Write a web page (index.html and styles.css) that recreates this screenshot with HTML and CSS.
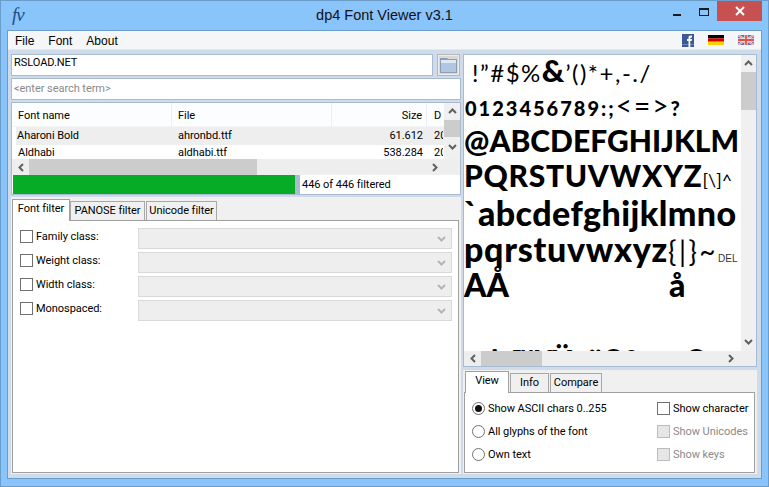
FILE: index.html
```html
<!DOCTYPE html>
<html lang="en">
<head>
<meta charset="utf-8">
<title>dp4 Font Viewer v3.1</title>
<link rel="stylesheet" href="styles.css">
</head>
<body>
<div class="window">
  <header class="titlebar">
    <span class="logo">fv</span>
    <span class="title">dp4 Font Viewer v3.1</span>
    <div class="controls">
      <span class="ctl"><span class="min"></span></span>
      <span class="ctl"><span class="max"></span></span>
      <span class="close"><svg width="12" height="10" viewBox="0 0 12 10"><path d="M2 1l8 8M10 1l-8 8" stroke="#fff" stroke-width="2" fill="none"/></svg></span>
    </div>
  </header>
  <div class="client">
    <nav class="menubar">
      <span class="menu">File</span><span class="menu">Font</span><span class="menu">About</span>
      <div class="flags">
        <svg class="fb" width="12" height="13" viewBox="0 0 12 13"><rect width="12" height="13" fill="#3b5998"/><rect y="10" width="12" height="1" fill="#6f88b8"/><path d="M6.500 13V7H5V5h1.500V3.800C6.500 2.300 7.400 1.500 8.700 1.500H10v2H9c-.5 0-.7.200-.7.700V5H10l-.3 2H8.300v6z" fill="#fff"/></svg>
        <svg class="de" width="16" height="10" viewBox="0 0 16 10"><rect width="16" height="3.400" fill="#000"/><rect y="3.400" width="16" height="3.300" fill="#d40000"/><rect y="6.700" width="16" height="3.300" fill="#ffce00"/></svg>
        <svg class="uk" width="16" height="10" viewBox="0 0 16 10"><rect width="16" height="10" fill="#5c6fb0"/><path d="M0 0l16 10M16 0L0 10" stroke="#e8dfe6" stroke-width="2"/><path d="M0 0l16 10M16 0L0 10" stroke="#e0707a" stroke-width=".7"/><path d="M8 0v10M0 5h16" stroke="#f0e8ea" stroke-width="3.400"/><path d="M8 0v10M0 5h16" stroke="#e8503c" stroke-width="1.800"/></svg>
      </div>
    </nav>
    <main class="panes">
      <section class="left">
        <div class="path-row">
          <div class="input path">RSLOAD.NET</div>
          <div class="browse"><svg width="17" height="15" viewBox="0 0 17 15"><path d="M0 15V0h7l1 1h9v14z" fill="#8c9db6"/><rect x="1" y="2" width="15" height="3" fill="#e3e9f2"/><rect x="1" y="5" width="15" height="9" fill="#b3c6df"/></svg></div>
        </div>
        <div class="input search">&lt;enter search term&gt;</div>
        <div class="list">
          <div class="list-main">
            <div class="list-view">
              <div class="row head"><span class="c1">Font name</span><span class="c2">File</span><span class="c3">Size</span><span class="c4">D</span></div>
              <div class="row first"><span class="c1">Aharoni Bold</span><span class="c2">ahronbd.ttf</span><span class="c3">61.612</span><span class="c4">20</span></div>
              <div class="row"><span class="c1">Aldhabi</span><span class="c2">aldhabi.ttf</span><span class="c3">538.284</span><span class="c4">20</span></div>
            </div>
            <div class="vscroll list-v">
              <svg class="arrow" width="9" height="6" viewBox="0 0 9 6"><path d="M1 5l3.500-3.500L8 5" stroke="#606060" stroke-width="2" fill="none"/></svg>
              <div class="thumb list-v-thumb"></div>
              <svg class="arrow" width="9" height="6" viewBox="0 0 9 6"><path d="M1 1l3.500 3.500L8 1" stroke="#606060" stroke-width="2" fill="none"/></svg>
            </div>
          </div>
          <div class="hscroll list-h">
            <svg class="arrow-h" width="6" height="9" viewBox="0 0 6 9"><path d="M5 1L1.500 4.500 5 8" stroke="#606060" stroke-width="2" fill="none"/></svg>
            <div class="thumb list-h-thumb"></div>
            <svg class="arrow-h end" width="6" height="9" viewBox="0 0 6 9"><path d="M1 1l3.500 3.500L1 8" stroke="#606060" stroke-width="2" fill="none"/></svg>
          </div>
          <div class="progress">
            <div class="bar"></div><div class="bar-gap"></div><span class="status">446 of 446 filtered</span>
          </div>
        </div>
        <div class="tabs left-tabs">
          <div class="tabstrip">
            <span class="tab active t-font">Font filter</span><span class="tab t-panose">PANOSE filter</span><span class="tab t-unicode">Unicode filter</span>
          </div>
          <div class="tabbody filters">
            <div class="filter"><span class="check"></span><label>Family class:</label><div class="combo"><svg width="9" height="6" viewBox="0 0 9 6"><path d="M1 1l3.500 3.500L8 1" stroke="#b4b4b4" stroke-width="2" fill="none"/></svg></div></div>
            <div class="filter"><span class="check"></span><label>Weight class:</label><div class="combo"><svg width="9" height="6" viewBox="0 0 9 6"><path d="M1 1l3.500 3.500L8 1" stroke="#b4b4b4" stroke-width="2" fill="none"/></svg></div></div>
            <div class="filter"><span class="check"></span><label>Width class:</label><div class="combo"><svg width="9" height="6" viewBox="0 0 9 6"><path d="M1 1l3.500 3.500L8 1" stroke="#b4b4b4" stroke-width="2" fill="none"/></svg></div></div>
            <div class="filter"><span class="check"></span><label>Monospaced:</label><div class="combo"><svg width="9" height="6" viewBox="0 0 9 6"><path d="M1 1l3.500 3.500L8 1" stroke="#b4b4b4" stroke-width="2" fill="none"/></svg></div></div>
          </div>
        </div>
      </section>
      <section class="right">
        <div class="viewer">
          <div class="viewer-main">
            <div class="canvas">
              <div class="gl l1"><i class="th">!”#$%</i><b class="amp">&amp;</b><i class="th">’()*+,-./</i></div>
              <div class="gl l2">0123456789:;<i class="th">&lt;=&gt;</i>?</div>
              <div class="gl l3">@ABCDEFGHIJKLM</div>
              <div class="gl l4">PQRSTUVWXYZ<i class="th small">[\]^</i></div>
              <div class="gl l5">`abcdefghijklmno</div>
              <div class="gl l6">pqrstuvwxyz<i class="th brace">{|}~</i><span class="del">DEL</span></div>
              <div class="gl l7"><span class="aa">AÅ</span><span class="aring">å</span></div>
              <div class="gl l8"><span class="p1">†</span><span class="p2">™¥Ÿ•¨©ª</span><span class="p3">©¬</span></div>
            </div>
            <div class="vscroll view-v">
              <svg class="arrow" width="9" height="6" viewBox="0 0 9 6"><path d="M1 5l3.500-3.500L8 5" stroke="#606060" stroke-width="2" fill="none"/></svg>
              <div class="thumb view-v-thumb"></div>
              <svg class="arrow endv" width="9" height="6" viewBox="0 0 9 6"><path d="M1 1l3.500 3.500L8 1" stroke="#606060" stroke-width="2" fill="none"/></svg>
            </div>
          </div>
          <div class="hscroll view-h">
            <svg class="arrow-h" width="6" height="9" viewBox="0 0 6 9"><path d="M5 1L1.500 4.500 5 8" stroke="#606060" stroke-width="2" fill="none"/></svg>
            <div class="thumb view-h-thumb"></div>
            <svg class="arrow-h end" width="6" height="9" viewBox="0 0 6 9"><path d="M1 1l3.500 3.500L1 8" stroke="#606060" stroke-width="2" fill="none"/></svg>
          </div>
        </div>
        <div class="tabs right-tabs">
          <div class="tabstrip">
            <span class="tab active t-view">View</span><span class="tab t-info">Info</span><span class="tab t-compare">Compare</span>
          </div>
          <div class="tabbody options">
            <div class="opt-col">
              <div class="opt"><span class="radio on"></span>Show ASCII chars 0..255</div>
              <div class="opt"><span class="radio"></span>All glyphs of the font</div>
              <div class="opt"><span class="radio"></span>Own text</div>
            </div>
            <div class="opt-col opt-right">
              <div class="opt"><span class="check"></span>Show character</div>
              <div class="opt off"><span class="check dis"></span>Show Unicodes</div>
              <div class="opt off"><span class="check dis"></span>Show keys</div>
            </div>
          </div>
        </div>
      </section>
    </main>
  </div>
</div>
</body>
</html>
```
FILE: styles.css
```css
* { box-sizing: border-box; }
html, body { margin: 0; padding: 0; }
body { width: 769px; height: 487px; overflow: hidden; font: 11px/14px Roboto, "Liberation Sans", sans-serif; letter-spacing: -.05px; color: #000; }
.window { width: 769px; height: 487px; background: #89c4fb; border: 1px solid #6b9dcb; display: flex; flex-direction: column; }

.titlebar { height: 29px; flex: none; display: flex; align-items: flex-start; position: relative; }
.logo { position: absolute; left: 11px; top: 4px; font: italic 19px/20px "Liberation Serif", serif; color: #1c4f86; letter-spacing: -1px; }
.title { flex: 1; text-align: center; font: 14.500px/20px "Liberation Sans", sans-serif; letter-spacing: 0; padding-top: 4px; color: #111; }
.controls { position: absolute; right: 6px; top: 0; display: flex; height: 20px; }
.ctl { width: 27px; display: flex; align-items: center; justify-content: center; }
.min { width: 8px; height: 2px; background: #1a1a1a; margin-top: 8px; }
.max { width: 10px; height: 8px; border: 1px solid #1a1a1a; border-top-width: 2px; margin-top: 1px; }
.close { width: 45px; background: #c75050; display: flex; align-items: center; justify-content: center; }

.client { flex: 1; margin: 0 6px 7px; border: 1px solid #6b9dcb; background: #d0dbe9; display: flex; flex-direction: column; min-height: 0; }
.menubar { height: 19px; flex: none; background: #f5f6f7; display: flex; align-items: center; padding: 2px 0 0 7px; border-bottom: 1px solid #e4e8ee; }
.menu { margin-right: 14px; font: 12px/14px "Liberation Sans", sans-serif; letter-spacing: 0; }
.flags { margin-left: auto; display: flex; align-items: center; padding-right: 7px; margin-top: -2px; }
.fb { margin-right: 14px; }
.uk { margin-left: 14px; }

.panes { flex: 1; display: flex; padding: 4px 3px 4px; gap: 2px; min-height: 0; }
.left { width: 450px; display: flex; flex-direction: column; gap: 2px; }
.right { width: 294px; display: flex; flex-direction: column; gap: 3px; }

.input { height: 22px; background: #fff; border: 1px solid #a9bbd3; padding: 3px 2px; }
.search { color: #8a8a8a; }
.path-row { display: flex; gap: 4px; }
.path { width: 422px; padding-top: 1px; }
.browse { width: 23px; height: 22px; background: #d9d9d9; border: 1px solid #b8b8b8; box-shadow: inset 0 0 0 1px #ececec; display: flex; align-items: center; justify-content: center; }

.list { height: 93px; background: #fff; border: 1px solid #a9bbd3; display: flex; flex-direction: column; }
.list-main { height: 56px; display: flex; }
.list-view { width: 432px; overflow: hidden; }
.row { display: flex; height: 15px; line-height: 15px; white-space: nowrap; }
.row.head { height: 24px; line-height: 25px; background: #fcfdfe; border-bottom: 1px solid #f4f4f4; }
.row.first { height: 18px; line-height: 18px; background: #eeeeee; margin-left: 4px; }
.row.first .c1 { width: 156px; padding-left: 1px; }
.c1 { width: 160px; padding-left: 6px; flex: none; }
.c2 { width: 160px; padding-left: 6px; flex: none; }
.c3 { width: 95px; text-align: right; padding-right: 4px; flex: none; }
.c4 { flex: none; padding-left: 7px; width: 16px; overflow: hidden; }
.head .c1, .head .c2, .head .c3 { border-right: 1px solid #e9eff6; height: 23px; }

.vscroll { width: 15px; background: #f0f0f0; display: flex; flex-direction: column; align-items: center; }
.thumb { background: #cccccc; }
.list-v { width: 16px; }
.arrow { flex: none; margin: 5px 0; }
.list-v-thumb { width: 100%; height: 17px; flex: none; margin-top: 1px; }
.list-v .arrow:last-child { margin-top: 7px; }
.hscroll { display: flex; align-items: center; background: #eeeeee; height: 16px; flex: none; }
.arrow-h { flex: none; margin: 0 6px; }
.arrow-h.end { margin-left: auto; }
.list-h-thumb { width: 228px; height: 16px; margin-left: -1px; }
.list-h .arrow-h.end { margin-right: 22px; }

.progress { flex: 1; display: flex; align-items: stretch; padding-left: 1px; }
.bar { width: 282px; background: #06ac26; }
.bar-gap { width: 5px; background: #a9bbd3; }
.status { padding-left: 2px; line-height: 19px; }

.tabs { background: #f0f0f0; display: flex; flex-direction: column; }
.left-tabs { flex: 1; padding: 2px 0 1px 1px; min-height: 0; }
.right-tabs { flex: 1; padding: 1px 2px 1px 1px; }
.right-tabs .tabstrip { padding-left: 1px; }
.tabstrip { display: flex; height: 21px; flex: none; align-items: flex-end; position: relative; z-index: 1; white-space: nowrap; }
.tab { height: 19px; border: 1px solid #a8a8a8; border-bottom: 0; background: #f0f0f0; text-align: center; line-height: 18px; margin-left: 1px; }
.tab.active { height: 22px; background: #fff; margin: 0 0 -1px; line-height: 17px; border-color: #a0a0a0; }
.t-font { width: 58px; margin-right: 1px; }
.tab.t-panose { width: 75px; margin-left: 0; }
.t-unicode { width: 71px; }
.t-view { width: 44px; }
.t-info { width: 39px; }
.t-compare { width: 52px; }
.tabbody { flex: 1; background: #fff; border: 1px solid #a0a0a0; }
.left-tabs .tabbody { margin-right: 2px; }
.filters { padding-top: 7px; }
.filter { display: flex; align-items: flex-start; height: 21px; margin-bottom: 3px; padding-left: 7px; }
.filter .check { margin-top: 2px; }
.filter label { width: 105px; flex: none; padding-left: 3px; margin-top: 2px; }
.check { width: 13px; height: 13px; border: 1px solid #707070; background: #fff; flex: none; }
.check.dis { background: #e6e6e6; border-color: #bcbcbc; }
.combo { width: 314px; height: 21px; background: #eeeeee; border: 1px solid #d9d9d9; display: flex; align-items: center; justify-content: flex-end; padding-right: 5px; }

.viewer { height: 313px; flex: none; border: 1px solid #a9bbd3; background: #fff; display: flex; flex-direction: column; }
.viewer-main { height: 296px; display: flex; }
.canvas { width: 277px; overflow: hidden; flex: none; font-family: Lato, sans-serif; font-weight: 900; line-height: 36px; white-space: nowrap; letter-spacing: 0; }
.view-v { width: 15px; }
.view-v-thumb { width: 100%; height: 38px; flex: none; }
.view-v .arrow { margin: 5px 0 6px; }
.view-v .endv { margin-top: auto; margin-bottom: 6px; }
.view-h { height: 15px; }
.view-h-thumb { width: 61px; height: 15px; margin-left: -1px; }
.view-h .arrow-h.end { margin-right: 22px; }
.gl i { font-style: normal; font-weight: 400; }
.amp { font-size: 31px; line-height: 1; font-weight: 900; letter-spacing: 1px; }
.l1 { height: 36px; font-size: 24px; padding-left: 8px; line-height: 30px; letter-spacing: 1.500px; overflow: hidden; }
.l2 { height: 38px; font-size: 20px; letter-spacing: 2px; line-height: 32px; font-weight: 900; padding-left: 1px; }
.l2 i { font-size: 28px; line-height: 1; }
.l3 { height: 36px; font-size: 30px; line-height: 22px; }
.l4 { height: 36px; font-size: 30px; letter-spacing: .7px; line-height: 20px; }
.l5 { height: 37px; font-size: 34px; letter-spacing: .4px; line-height: 24px; }
.l6 { height: 36px; font-size: 34px; letter-spacing: .7px; line-height: 22px; }
.small { font-size: 18px; letter-spacing: 0; }
.brace { font-size: 28px; letter-spacing: 2.500px; }
.del { font: 10px "Liberation Sans", sans-serif; color: #333; letter-spacing: 0; }
.l7 { height: 58px; font-size: 32px; display: flex; line-height: 22px; }
.aa { width: 205px; }
.l8 { font-size: 30px; display: flex; line-height: 30px; padding-top: 13px; }
.p1 { width: 48px; padding-left: 22px; }
.p2 { width: 172px; }

.options { display: flex; justify-content: space-between; padding: 4px 0 0 7px; }
.opt-col { display: flex; flex-direction: column; }
.opt-right { width: 97px; }
.opt { display: flex; align-items: center; height: 23px; gap: 3px; white-space: nowrap; }
.opt.off { color: #8a8a8a; }
.radio { width: 13px; height: 13px; border: 1px solid #707070; border-radius: 50%; background: #fff; position: relative; flex: none; }
.radio.on::after { content: ""; position: absolute; left: 2px; top: 2px; width: 7px; height: 7px; border-radius: 50%; background: #111; }
```
